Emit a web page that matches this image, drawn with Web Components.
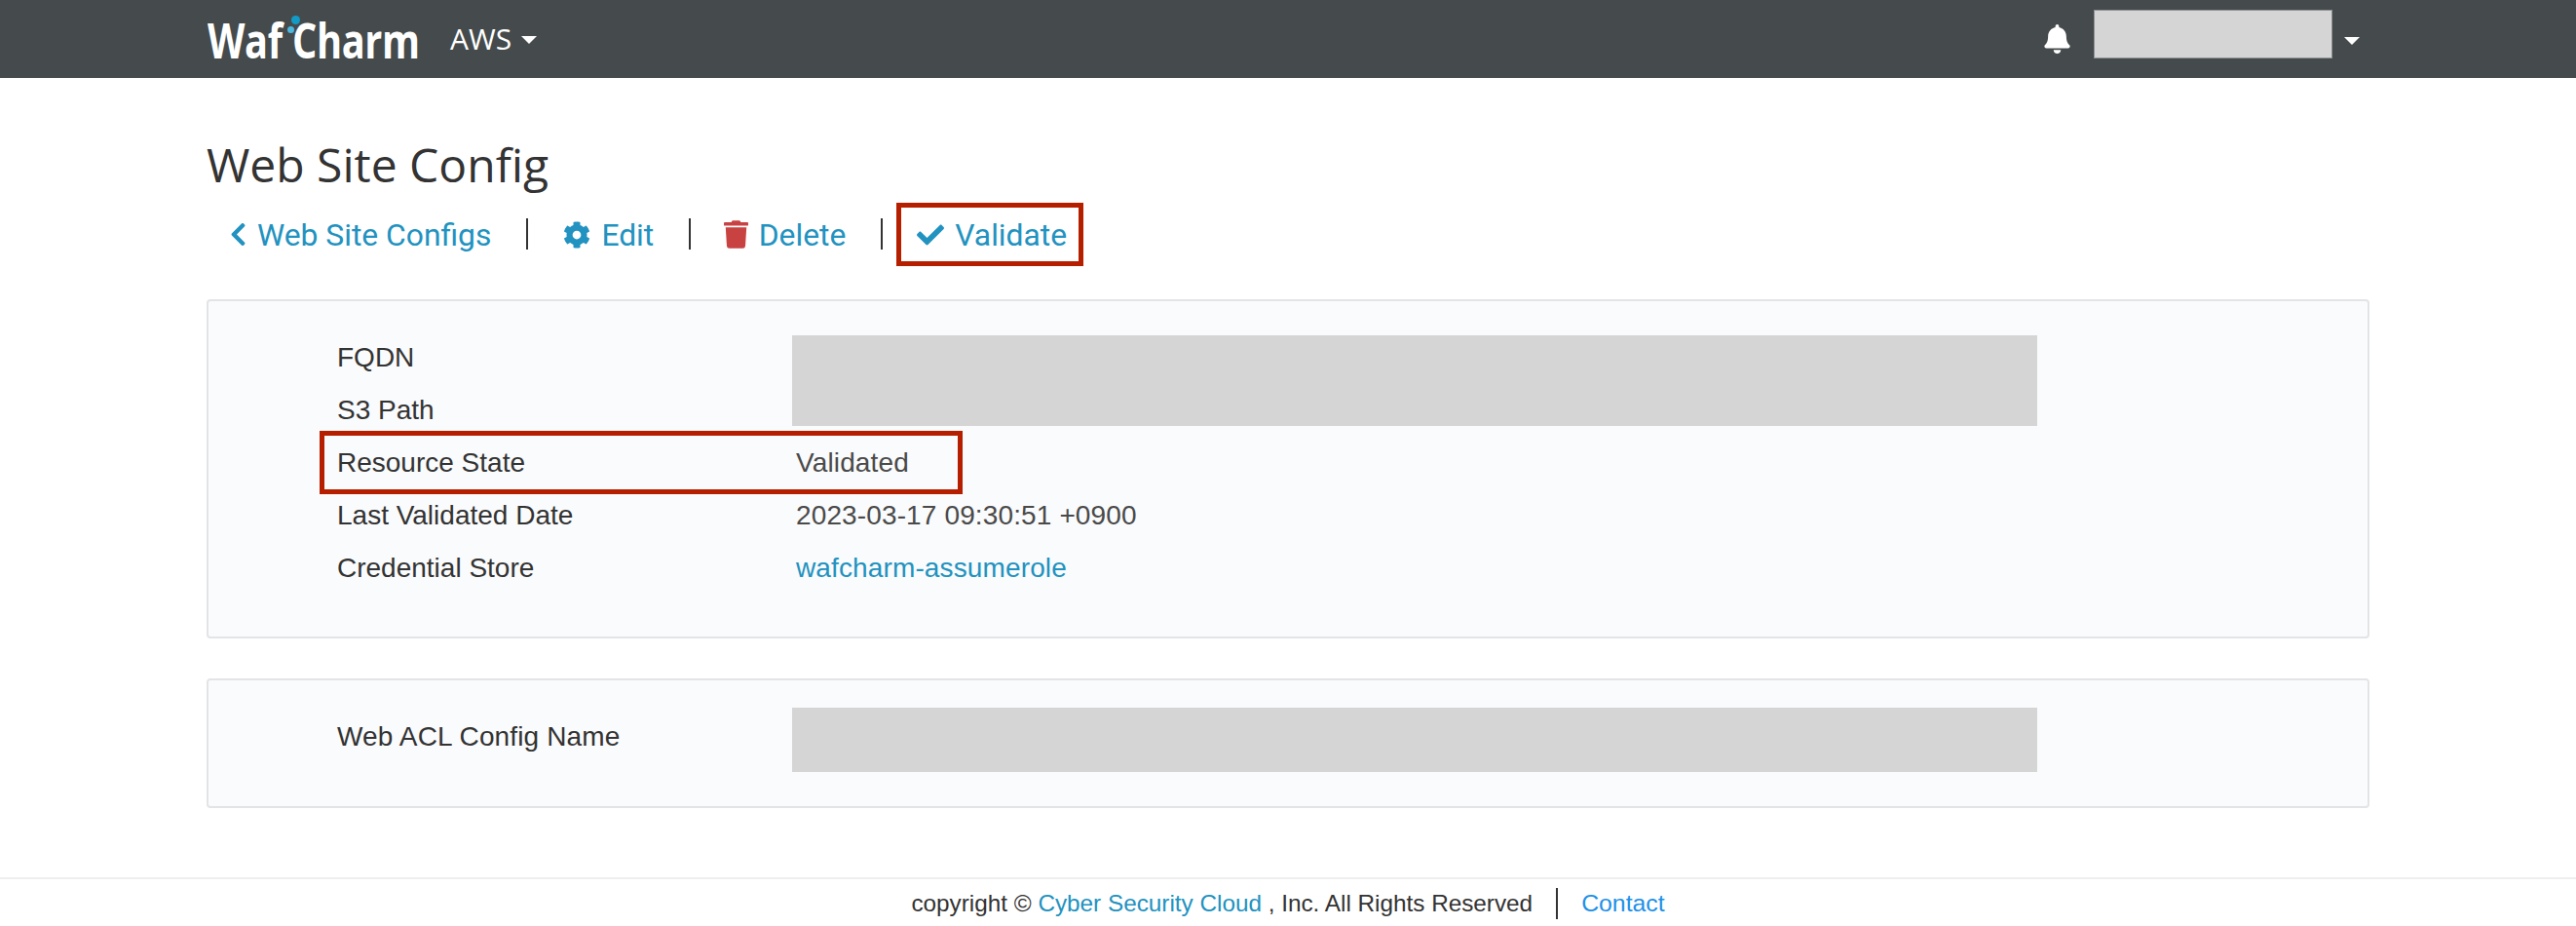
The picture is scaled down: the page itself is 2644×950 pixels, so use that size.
<!DOCTYPE html>
<html lang="en">
<head>
<meta charset="utf-8">
<title>Web Site Config</title>
<style>
html,body{margin:0;padding:0;background:#fff;}
body{font-family:"Liberation Sans",Arial,sans-serif;color:#333;overflow:hidden;}
</style>
</head>
<body>
<wc-navbar></wc-navbar>
<wc-page>
  <wc-title>Web Site Config</wc-title>
  <wc-actions>
    <wc-action icon="chevron">Web Site Configs</wc-action>
    <wc-sep></wc-sep>
    <wc-action icon="cog">Edit</wc-action>
    <wc-sep></wc-sep>
    <wc-action icon="trash" style="margin-left:-2.5px">Delete</wc-action>
    <wc-sep></wc-sep>
    <wc-action icon="check" highlighted>Validate</wc-action>
  </wc-actions>
  <wc-panel>
    <wc-row label="FQDN"><wc-redact style="--t:4px;--h:93px"></wc-redact></wc-row>
    <wc-row label="S3 Path"></wc-row>
    <wc-row label="Resource State" highlighted>Validated</wc-row>
    <wc-row label="Last Validated Date">2023-03-17 09:30:51 +0900</wc-row>
    <wc-row label="Credential Store"><wc-link>wafcharm-assumerole</wc-link></wc-row>
  </wc-panel>
  <wc-panel>
    <wc-row label="Web ACL Config Name" style="letter-spacing:.13px"><wc-redact style="--t:-3px;--h:66px"></wc-redact></wc-row>
  </wc-panel>
</wc-page>
<wc-footer></wc-footer>

<script>
const ICONS = {
  chevron:{vb:'0 0 320 512',w:17,h:27,c:'#2292c0',d:'M34.52 239.03L228.87 44.69c9.37-9.37 24.57-9.37 33.94 0l22.67 22.67c9.36 9.36 9.37 24.52.04 33.9L131.49 256l154.02 154.75c9.34 9.38 9.32 24.54-.04 33.9l-22.67 22.67c-9.37 9.37-24.57 9.37-33.94 0L34.52 272.97c-9.37-9.37-9.37-24.57 0-33.94z'},
  cog:{vb:'0 0 512 512',w:28,h:28,c:'#2292c0',d:'M487.4 315.7l-42.6-24.6c4.3-23.2 4.3-47 0-70.2l42.6-24.6c4.9-2.8 7.1-8.6 5.5-14-11.1-35.6-30-67.8-54.7-94.6-3.8-4.1-10-5.1-14.8-2.3L380.8 110c-17.9-15.4-38.5-27.3-60.8-35.1V25.8c0-5.6-3.9-10.5-9.4-11.7-36.7-8.2-74.3-7.8-109.2 0-5.5 1.2-9.4 6.1-9.4 11.7V75c-22.2 7.9-42.8 19.8-60.8 35.1L88.7 85.5c-4.9-2.8-11-1.9-14.8 2.3-24.7 26.7-43.6 58.9-54.7 94.6-1.7 5.4.6 11.2 5.5 14L67.3 221c-4.3 23.2-4.3 47 0 70.2l-42.6 24.6c-4.9 2.8-7.1 8.6-5.5 14 11.1 35.6 30 67.8 54.7 94.6 3.8 4.1 10 5.1 14.8 2.3l42.6-24.6c17.9 15.4 38.5 27.3 60.8 35.1v49.2c0 5.6 3.9 10.5 9.4 11.7 36.7 8.2 74.3 7.8 109.2 0 5.5-1.2 9.4-6.1 9.4-11.7v-49.2c22.2-7.9 42.8-19.8 60.8-35.1l42.6 24.6c4.9 2.8 11 1.9 14.8-2.3 24.7-26.7 43.6-58.9 54.7-94.6 1.5-5.5-.7-11.3-5.6-14.1zM256 336c-44.1 0-80-35.9-80-80s35.9-80 80-80 80 35.9 80 80-35.9 80-80 80z'},
  trash:{vb:'0 0 448 512',w:25,h:29,c:'#c94242',d:'M432 32H312l-9.4-18.7A24 24 0 0 0 281.1 0H166.8a23.72 23.72 0 0 0-21.4 13.3L136 32H16A16 16 0 0 0 0 48v32a16 16 0 0 0 16 16h416a16 16 0 0 0 16-16V48a16 16 0 0 0-16-16zM53.2 467a48 48 0 0 0 47.9 45h245.8a48 48 0 0 0 47.9-45L416 128H32z'},
  check:{vb:'0 0 512 512',w:28,h:28,c:'#2292c0',d:'M173.898 439.404l-166.4-166.4c-9.997-9.997-9.997-26.206 0-36.204l36.203-36.204c9.997-9.998 26.207-9.998 36.204 0L192 312.69 432.095 72.596c9.997-9.997 26.207-9.997 36.204 0l36.203 36.204c9.997 9.997 9.997 26.206 0 36.204l-294.4 294.401c-9.998 9.997-26.207 9.997-36.204-.001z'},
  bell:{vb:'0 0 448 512',w:27,h:30,c:'#fff',d:'M224 512c35.32 0 63.97-28.65 63.97-64H160.03c0 35.35 28.65 64 63.97 64zm215.39-149.71c-19.32-20.76-55.47-51.99-55.47-154.29 0-77.7-54.48-139.9-127.94-155.16V32c0-17.67-14.32-32-31.98-32s-31.98 14.33-31.98 32v20.84C118.56 68.1 64.08 130.3 64.08 208c0 102.3-36.15 133.53-55.47 154.29-6 6.45-8.66 14.16-8.61 21.71.11 16.4 12.98 32 32.1 32h383.8c19.12 0 32-15.6 32.1-32 .05-7.55-2.61-15.27-8.61-21.71z'}
};
const svg = n => { const i = ICONS[n]; return `<svg xmlns="http://www.w3.org/2000/svg" viewBox="${i.vb}" width="${i.w}" height="${i.h}" fill="${i.c}" aria-hidden="true" style="display:block;flex:none"><path d="${i.d}"/></svg>`; };

function def(name, html){
  customElements.define(name, class extends HTMLElement{
    constructor(){ super(); this.attachShadow({mode:'open'}); }
    connectedCallback(){
      this.shadowRoot.innerHTML = typeof html === 'function' ? html(this) : html;
    }
  });
}

def('wc-logo', `<style>
:host{display:block;position:relative;width:217px;height:80px;flex:none}
.t{position:absolute;left:-1px;top:11px;white-space:nowrap;font:700 50px/60px "Open Sans",sans-serif;color:#fff;transform:scaleX(.795);transform-origin:0 0;letter-spacing:-.5px}
.g{display:inline-block;width:13px}
.a,.b{position:absolute;border-radius:50%}
.a{left:85px;top:16px;width:9px;height:9px;background:#129bc6}
.b{left:81px;top:27px;width:7px;height:7px;background:#4cb8de}
</style><span class="t">Waf<span class="g"></span>Charm</span><span class="a"></span><span class="b"></span>`);

def('wc-caret', `<style>
:host{display:block;flex:none;width:0;height:0;border-left:8px solid transparent;border-right:8px solid transparent;border-top:8px solid #fff}
</style>`);

def('wc-navbar', `<style>
:host{display:flex;align-items:center;height:80px;background:#454b4c;padding:0 222px 0 214px;color:#fff;box-sizing:border-box}
.aws{margin-left:31px;font:400 30px/40px "Open Sans",sans-serif;color:#fff}
wc-caret{margin:2px 0 0 10px}
.end{margin-left:auto;display:flex;align-items:center}
.bell{margin:0 24px 0 0}
.user{width:245px;height:50px;background:#d5d5d5;box-sizing:border-box;border:1px solid #8f9394;margin-top:-11px}
.end wc-caret{margin:4px 0 0 12px}
</style>
<wc-logo></wc-logo><span class="aws">AWS</span><wc-caret></wc-caret>
<div class="end"><div class="bell">${svg('bell')}</div><div class="user"></div><wc-caret></wc-caret></div>`);

def('wc-page', `<style>
:host{display:block;padding:58px 212px 71px}
</style><slot></slot>`);

def('wc-title', `<style>
:host{display:block;font:400 48px/60px "Open Sans",sans-serif;color:#333;position:relative;top:1px}
</style><slot></slot>`);

def('wc-actions', `<style>
:host{display:flex;align-items:center;height:65px;margin:10px 0 34px;padding-left:24px;gap:36px}
</style><slot></slot>`);

def('wc-sep', `<style>
:host{display:block;width:2px;height:32px;background:#333;flex:none;margin-top:-1px}
</style>`);

def('wc-action', el => {
  const hi = el.hasAttribute('highlighted');
  return `<style>
:host{display:block;flex:none;${hi ? 'margin-left:-22px;' : ''}}
.a{display:flex;align-items:center;gap:11px;font:400 31.8px/55px Roboto,sans-serif;color:#2292c0;white-space:nowrap;text-decoration:none;${hi ? 'border:5px solid #b51f00;padding:0 12px 0 16px;' : ''}}
span{position:relative;top:1px}
</style><a class="a" href="#">${svg(el.getAttribute('icon'))}<span><slot></slot></span></a>`;
});

def('wc-panel', `<style>
:host{display:block;background:#fafbfc;border:2px solid #e3e4e6;border-radius:4px;padding:31px 130px 43px 132px;margin-bottom:41px}
:host(:last-of-type){margin-bottom:0;padding-bottom:44px}
</style><slot></slot>`);

def('wc-row', el => {
  const hi = el.hasAttribute('highlighted');
  return `<style>
:host{display:grid;grid-template-columns:471px 1fr;height:54px;align-items:center;position:relative;font:400 28px/54px "Liberation Sans",Arial,sans-serif}
.l{color:#333}
.v{color:#4a4a4a;position:relative;height:54px;letter-spacing:.13px}
.box{position:absolute;left:-18px;top:-6px;width:660px;height:65px;box-sizing:border-box;border:5px solid #b51f00;pointer-events:none}
</style><div class="l">${el.getAttribute('label')}</div><div class="v"><slot></slot></div>${hi ? '<div class="box"></div>' : ''}`;
});

def('wc-link', `<style>
:host{display:inline;color:#2292c0}
</style><slot></slot>`);

def('wc-redact', `<style>
:host{display:block;position:absolute;left:-4px;top:var(--t);width:1278px;height:var(--h);background:#d5d5d5}
</style>`);

def('wc-footer', `<style>
:host{display:flex;justify-content:center;align-items:center;height:50px;border-top:2px solid #eee;box-sizing:border-box;padding-top:2px;font:400 24.3px/32px "Liberation Sans",Arial,sans-serif;color:#333}
.c{color:#2292c0}
.s{width:2px;height:32px;background:#333;margin:0 24px}
.k{color:#1e90e8;font-size:24.8px}
</style><span>copyright © <span class="c">Cyber Security Cloud</span> , Inc. All Rights Reserved</span><span class="s"></span><span class="k">Contact</span>`);
</script>
</body>
</html>
